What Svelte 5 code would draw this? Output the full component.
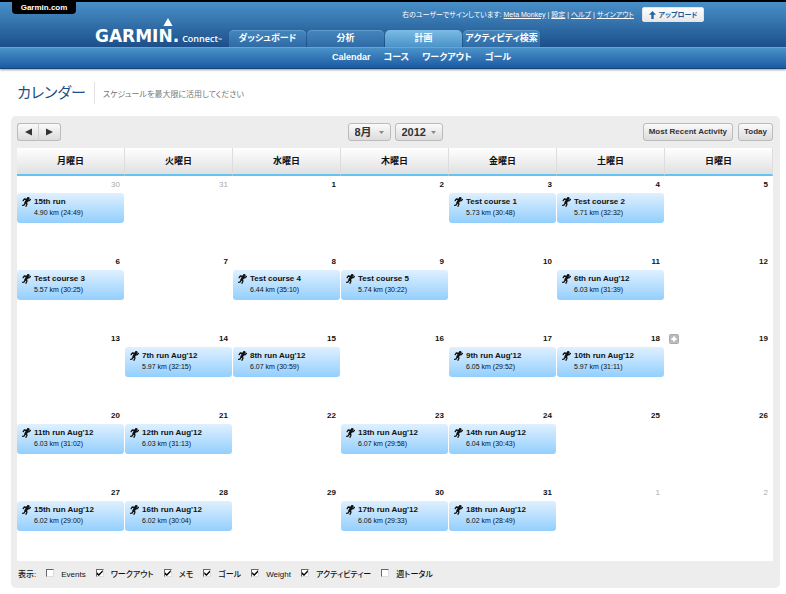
<script lang="ts">
    type Run = { name: string; detail: string };
    type Day = { num: number; other?: boolean; add?: boolean; run?: Run };

    const run = (name: string, km: string, time: string): Run => ({ name, detail: `${km} km (${time})` });

    const tabs = ['ダッシュボード', '分析', '計画', 'アクティビティ検索'];
    const subTabs = ['Calendar', 'コース', 'ワークアウト', 'ゴール'];
    const weekdays = ['月曜日', '火曜日', '水曜日', '木曜日', '金曜日', '土曜日', '日曜日'];

    const weeks: Day[][] = [
        [
            { num: 30, other: true, run: run('15th run', '4.90', '24:49') },
            { num: 31, other: true },
            { num: 1 },
            { num: 2 },
            { num: 3, run: run('Test course 1', '5.73', '30:48') },
            { num: 4, run: run('Test course 2', '5.71', '32:32') },
            { num: 5 },
        ],
        [
            { num: 6, run: run('Test course 3', '5.57', '30:25') },
            { num: 7 },
            { num: 8, run: run('Test course 4', '6.44', '35:10') },
            { num: 9, run: run('Test course 5', '5.74', '30:22') },
            { num: 10 },
            { num: 11, run: run("6th run Aug'12", '6.03', '31:39') },
            { num: 12 },
        ],
        [
            { num: 13 },
            { num: 14, run: run("7th run Aug'12", '5.97', '32:15') },
            { num: 15, run: run("8th run Aug'12", '6.07', '30:59') },
            { num: 16 },
            { num: 17, run: run("9th run Aug'12", '6.05', '29:52') },
            { num: 18, run: run("10th run Aug'12", '5.97', '31:11') },
            { num: 19, add: true },
        ],
        [
            { num: 20, run: run("11th run Aug'12", '6.03', '31:02') },
            { num: 21, run: run("12th run Aug'12", '6.03', '31:13') },
            { num: 22 },
            { num: 23, run: run("13th run Aug'12", '6.07', '29:58') },
            { num: 24, run: run("14th run Aug'12", '6.04', '30:43') },
            { num: 25 },
            { num: 26 },
        ],
        [
            { num: 27, run: run("15th run Aug'12", '6.02', '29:00') },
            { num: 28, run: run("16th run Aug'12", '6.02', '30:04') },
            { num: 29 },
            { num: 30, run: run("17th run Aug'12", '6.06', '29:33') },
            { num: 31, run: run("18th run Aug'12", '6.02', '28:49') },
            { num: 1, other: true },
            { num: 2, other: true },
        ],
    ];

    let filters = $state([
        { label: 'Events', on: false },
        { label: 'ワークアウト', on: true },
        { label: 'メモ', on: true },
        { label: 'ゴール', on: true },
        { label: 'Weight', on: true },
        { label: 'アクティビティー', on: true },
        { label: '週トータル', on: false },
    ]);
    let month = $state('8月');
    let year = $state('2012');
</script>

<div class="page">
    <header>
        <div class="banner">
            <a class="corp" href="#garmin">Garmin.com</a>
            <div class="account">
                <span>右のユーザーでサインしています:
                    <a href="#profile">Meta&nbsp;Monkey</a> | <a href="#settings">設定</a> | <a href="#help">ヘルプ</a> | <a href="#signout">サインアウト</a></span>
                <button class="upload">
                    <svg width="7" height="8" viewBox="0 0 7 8" aria-hidden="true"><path d="M3.5 0 7 3.8H4.7V8H2.3V3.8H0z" fill="#1d68a8" /></svg>
                    アップロード
                </button>
            </div>
            <div class="main-row">
                <a class="logo" href="#home">
                    <span class="garmin">GARMIN.</span>
                    <svg class="delta" width="10" height="8" viewBox="0 0 10 8" aria-hidden="true"><path d="M5 0 9.6 8H.4z" fill="#fff" /></svg>
                    <span class="connect">Connect<small>™</small></span>
                </a>
                <nav class="tabs">
                    {#each tabs as tab}
                        <a href="#tab" class:active={tab === '計画'}>{tab}</a>
                    {/each}
                </nav>
            </div>
        </div>
        <nav class="sub">
            {#each subTabs as tab}
                <a href="#sub">{tab}</a>
            {/each}
        </nav>
    </header>

    <div class="heading">
        <h1>カレンダー</h1>
        <p>スケジュールを最大限に活用してください</p>
    </div>

    <main>
        <div class="toolbar">
            <div class="pager">
                <button aria-label="前の月"><svg width="7" height="8" viewBox="0 0 7 8"><path d="M0 4 7 .5v7z" fill="#333" /></svg></button>
                <button aria-label="次の月"><svg width="7" height="8" viewBox="0 0 7 8"><path d="M7 4 0 .5v7z" fill="#333" /></svg></button>
            </div>
            <div class="pickers">
                <select class="month" aria-label="月" bind:value={month}>
                    <option>7月</option>
                    <option>8月</option>
                    <option>9月</option>
                </select>
                <select class="year" aria-label="年" bind:value={year}>
                    <option>2011</option>
                    <option>2012</option>
                </select>
            </div>
            <div class="jump">
                <button>Most Recent Activity</button>
                <button>Today</button>
            </div>
        </div>

        <table>
            <thead>
                <tr>
                    {#each weekdays as day}
                        <th scope="col">{day}</th>
                    {/each}
                </tr>
            </thead>
            <tbody>
                {#each weeks as week}
                    <tr>
                        {#each week as day}
                            <td>
                                <div class="date" class:other={day.other}>
                                    {#if day.add}
                                        <button class="add" aria-label="追加">
                                            <svg width="10" height="10" viewBox="0 0 10 10"><rect x=".5" y=".5" width="9" height="9" rx="1" fill="#bbb" stroke="#aaa" /><path d="M5 2.5v5M2.5 5h5" stroke="#fff" stroke-width="2" /></svg>
                                        </button>
                                    {/if}
                                    <span>{day.num}</span>
                                </div>
                                {#if day.run}
                                    <a class="event" href="#activity">
                                        <svg width="9" height="10" viewBox="0 0 9 10" aria-hidden="true">
                                            <circle cx="6.2" cy="1.4" r="1.4" fill="#111" />
                                            <path d="M5.2 3 3.7 5.6" stroke="#111" stroke-width="2.7" stroke-linecap="round" />
                                            <path d="M5 2.4 2.2 2 1.2 3.6M5.8 3.6l.9.3L8.4 2.4M3.8 5.6l1.2 1.3L4 9.3M3.2 6 2.3 7.8.7 8.4" stroke="#111" stroke-width="1.3" fill="none" stroke-linecap="round" stroke-linejoin="round" />
                                        </svg>
                                        <span class="info">
                                            <strong>{day.run.name}</strong>
                                            <span>{day.run.detail}</span>
                                        </span>
                                    </a>
                                {/if}
                            </td>
                        {/each}
                    </tr>
                {/each}
            </tbody>
        </table>

        <div class="filters">
            <span class="show">表示:</span>
            {#each filters as f}
                <label><input type="checkbox" bind:checked={f.on} />{f.label}</label>
            {/each}
        </div>
    </main>
</div>

<style>
    :global(body) {
        margin: 0;
        background: #fff;
    }
    .page {
        font-family: "Liberation Sans", "Noto Sans CJK JP", sans-serif;
        font-feature-settings: "palt";
        font-size: 8px;
        line-height: 10px;
        color: #111;
        padding-bottom: 6px;
    }
    button, select, input {
        font: inherit;
        font-feature-settings: inherit;
        color: inherit;
        margin: 0;
        padding: 0;
        box-sizing: border-box;
    }
    a {
        color: inherit;
        text-decoration: none;
    }
    svg {
        display: block;
        flex: none;
    }

    /* header */
    header {
        color: #fff;
        border-bottom: 1px solid #17457a;
        box-shadow: 0 1px 2px #999;
    }
    .banner {
        position: relative;
        border-top: 2px solid #000;
        background: linear-gradient(#4990c8, #1c4f89);
    }
    .corp {
        position: absolute;
        top: 0;
        left: 12px;
        width: 64px;
        height: 12px;
        line-height: 11px;
        background: #000;
        border-radius: 0 0 4px 4px;
        text-align: center;
        font-weight: bold;
    }
    .account {
        display: flex;
        justify-content: flex-end;
        align-items: center;
        gap: 8px;
        height: 25px;
        padding-right: 82px;
        font-size: 7px;
    }
    .account a {
        text-decoration: underline;
    }
    .upload {
        display: flex;
        align-items: center;
        justify-content: center;
        gap: 3px;
        width: 62px;
        height: 15px;
        border: 1px solid #e4e4e4;
        border-radius: 2px;
        background: linear-gradient(#fff, #e8e8e8);
        color: #1f5a96;
        font-weight: bold;
    }
    .main-row {
        display: flex;
        align-items: flex-end;
        height: 20px;
        padding-left: 95px;
    }
    .logo {
        position: relative;
        display: flex;
        align-items: baseline;
        gap: 3px;
        width: 134px;
        height: 20px;
        line-height: 18px;
    }
    .garmin {
        font-family: "DejaVu Sans", sans-serif;
        font-weight: bold;
        font-size: 17px;
    }
    .delta {
        position: absolute;
        left: 68px;
        top: -9px;
    }
    .connect {
        font-family: "Open Sans", sans-serif;
        font-weight: 600;
        font-size: 9px;
    }
    .connect small {
        font-size: 5px;
    }
    .tabs {
        display: flex;
        gap: 1px;
    }
    .tabs a {
        width: 77px;
        height: 17px;
        line-height: 16px;
        border-radius: 5px 5px 0 0;
        background: linear-gradient(#4586bd, #2f6ba6);
        box-shadow: inset 0 1px 0 #5f9bcb;
        text-align: center;
        font-size: 9px;
        font-weight: bold;
        white-space: nowrap;
    }
    .tabs a.active {
        background: linear-gradient(#7cbbe4, #4a93c9);
        box-shadow: none;
    }
    .sub {
        display: flex;
        gap: 13px;
        height: 20px;
        line-height: 19px;
        padding-left: 332px;
        border-top: 1px solid #6aa5d2;
        background: linear-gradient(#4a92c8, #1b5aa3);
        font-size: 9px;
        font-weight: bold;
    }

    .heading {
        display: flex;
        align-items: center;
        height: 24px;
        margin: 12px 17px 11px;
    }
    .heading h1 {
        margin: 0;
        padding-right: 8px;
        border-right: 1px solid #e2e2e2;
        font-size: 15px;
        line-height: 22px;
        font-weight: 400;
        color: #1c4f89;
    }
    .heading p {
        margin: 0;
        padding: 4px 0 0 8px;
        color: #777;
    }

    main {
        margin: 0 6px 0 11px;
        padding: 0 7px 0 6px;
        border-radius: 5px;
        background: #ededed;
    }

    /* toolbar */
    .toolbar {
        display: grid;
        grid-template-columns: 1fr auto 1fr;
        align-items: center;
        height: 32px;
    }
    .toolbar button, .toolbar select {
        height: 18px;
        border: 1px solid #bbb;
        border-radius: 3px;
        background-color: #eee;
        background-image: linear-gradient(#fafafa, #dcdcdc);
        color: #333;
        font-weight: bold;
    }
    .pager, .pickers, .jump {
        display: flex;
    }
    .pager button {
        display: flex;
        align-items: center;
        justify-content: center;
        width: 22px;
    }
    .pager button:first-child {
        border-radius: 3px 0 0 3px;
        border-right-color: #d0d0d0;
    }
    .pager button:last-child {
        border-left: 0;
        border-radius: 0 3px 3px 0;
    }
    .pickers {
        gap: 4px;
    }
    .toolbar select {
        appearance: none;
        padding: 0 6px;
        background-image:
            url("data:image/svg+xml,%3Csvg xmlns='http://www.w3.org/2000/svg' width='5' height='3'%3E%3Cpath d='M0 0h5L2.5 3z' fill='%23888'/%3E%3C/svg%3E"),
            linear-gradient(#fafafa, #dcdcdc);
        background-repeat: no-repeat;
        background-position: right 6px center, 0 0;
        font-size: 11px;
    }
    .month {
        width: 43px;
    }
    .year {
        width: 48px;
    }
    .jump {
        justify-content: flex-end;
        gap: 5px;
    }
    .jump button {
        padding: 0 5px;
    }

    /* calendar */
    table {
        width: 100%;
        table-layout: fixed;
        border-collapse: separate;
        border-spacing: 0;
        background: #fff;
    }
    th {
        height: 26px;
        padding: 0;
        border-right: 1px solid #ddd;
        border-bottom: 2px solid #62c3f5;
        background: linear-gradient(#fff, #e0e0e0);
        font-size: 9px;
    }
    td {
        height: 77px;
        padding: 0;
        vertical-align: top;
    }
    .date {
        display: flex;
        align-items: center;
        height: 17px;
        padding: 0 5px 0 4px;
        font-weight: bold;
    }
    .date span {
        margin-left: auto;
    }
    .date.other {
        color: #aaa;
        font-weight: normal;
    }
    .add {
        border: 0;
        background: none;
    }
    .event {
        display: flex;
        gap: 3px;
        height: 30px;
        margin-right: 1px;
        padding: 4px 0 0 5px;
        box-sizing: border-box;
        border-radius: 3px;
        background: linear-gradient(#dff0ff, #93cffd);
    }
    .info {
        display: flex;
        flex-direction: column;
        white-space: nowrap;
    }
    .info span {
        font-size: 7px;
        line-height: 12px;
    }

    .filters {
        display: flex;
        align-items: center;
        gap: 10px;
        height: 27px;
        padding-left: 1px;
        font-weight: 500;
    }
    .filters label {
        display: flex;
        align-items: center;
        gap: 7px;
    }
    .filters input {
        appearance: none;
        display: grid;
        place-items: center;
        width: 8px;
        height: 8px;
        margin-bottom: 3px;
        border: 1px solid #666;
        border-right-color: #ddd;
        border-bottom-color: #ddd;
        background: #fff;
    }
    .filters input:checked::before {
        content: "";
        width: 6px;
        height: 6px;
        background: #000;
        clip-path: polygon(0 35%, 35% 65%, 100% 0, 100% 35%, 35% 100%, 0 70%);
    }
</style>
